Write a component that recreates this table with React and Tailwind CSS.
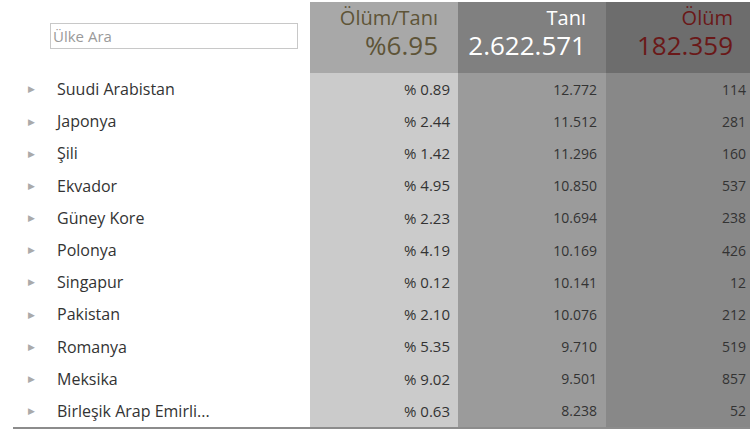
const rows = [
  ["Suudi Arabistan", "% 0.89", "12.772", "114"],
  ["Japonya", "% 2.44", "11.512", "281"],
  ["Şili", "% 1.42", "11.296", "160"],
  ["Ekvador", "% 4.95", "10.850", "537"],
  ["Güney Kore", "% 2.23", "10.694", "238"],
  ["Polonya", "% 4.19", "10.169", "426"],
  ["Singapur", "% 0.12", "10.141", "12"],
  ["Pakistan", "% 2.10", "10.076", "212"],
  ["Romanya", "% 5.35", "9.710", "519"],
  ["Meksika", "% 9.02", "9.501", "857"],
  ["Birleşik Arap Emirli...", "% 0.63", "8.238", "52"],
]

function App() {
  return (
    <div className="w-[750px] h-[429px] bg-white overflow-hidden text-[#333] font-['Open_Sans',sans-serif]">
      <div className="grid grid-cols-[310px_148px_148px_144px] pt-[2px]">
        <div className="h-[71px] flex items-center pl-[50px]">
          <input
            type="text"
            placeholder="Ülke Ara"
            className="w-[248px] h-[26px] mt-[-4px] border border-[#c8c8c8] px-[2px] text-[15px] placeholder:text-[#9a9a9a] outline-none"
          />
        </div>
        <div className="h-[71px] bg-[#a8a8a8] text-right pr-[20px] text-[#5e5437]">
          <div className="text-[20px] leading-[22px] pt-[5px]">Ölüm/Tanı</div>
          <div className="text-[26px] leading-[28px] mt-[2px]">%6.95</div>
        </div>
        <div className="h-[71px] bg-[#808080] text-right pr-[20px] text-white">
          <div className="text-[20px] leading-[22px] pt-[5px]">Tanı</div>
          <div className="text-[26px] leading-[28px] mt-[2px]">2.622.571</div>
        </div>
        <div className="h-[71px] bg-[#6d6d6d] text-right pr-[17px] text-[#6a1818]">
          <div className="text-[20px] leading-[22px] pt-[5px]">Ölüm</div>
          <div className="text-[26px] leading-[28px] mt-[2px]">182.359</div>
        </div>
      </div>
      <div className="grid grid-cols-[310px_148px_148px_144px]">
        <div className="flex flex-col">
          {rows.map((r) => (
            <div key={r[0]} className="h-[32.2px] flex items-center">
              <span className="w-[57px] pl-[28px] text-[#aaa] text-[9px]">▶</span>
              <span className="text-[16px]">{r[0]}</span>
            </div>
          ))}
        </div>
        <div className="bg-[#cbcbcb] flex flex-col">
          {rows.map((r) => (
            <div key={r[0]} className="h-[32.2px] flex items-center justify-end pr-[8px] text-[15px]">{r[1]}</div>
          ))}
        </div>
        <div className="bg-[#9b9b9b] flex flex-col">
          {rows.map((r) => (
            <div key={r[0]} className="h-[32.2px] flex items-center justify-end pr-[9px] text-[14px]">{r[2]}</div>
          ))}
        </div>
        <div className="bg-[#888888] flex flex-col">
          {rows.map((r) => (
            <div key={r[0]} className="h-[32.2px] flex items-center justify-end pr-[4px] text-[14px]">{r[3]}</div>
          ))}
        </div>
      </div>
      <div className="ml-[13px] h-[2px] bg-[#8c8c8c]" />
    </div>
  )
}

export default App
